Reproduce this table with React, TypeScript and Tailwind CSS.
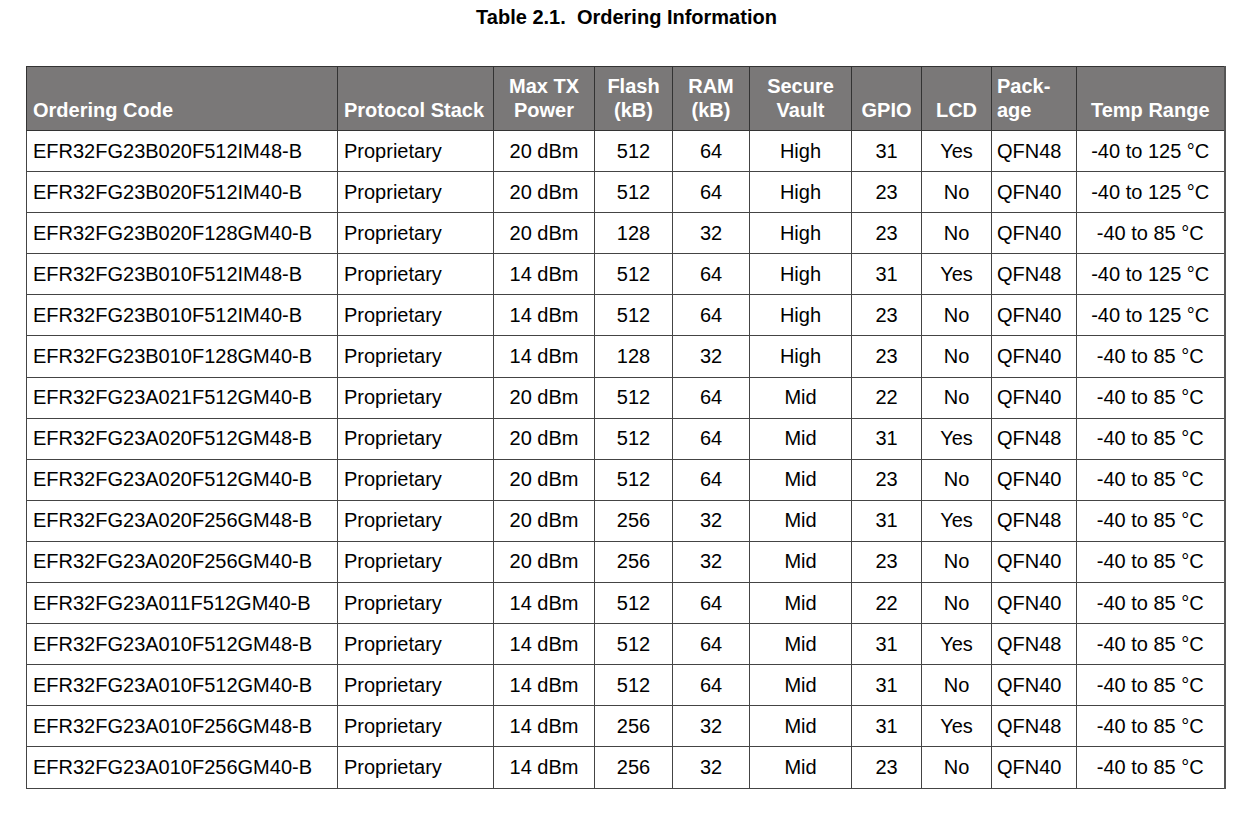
const rows: string[][] = [
  ['EFR32FG23B020F512IM48-B', 'Proprietary', '20 dBm', '512', '64', 'High', '31', 'Yes', 'QFN48', '-40 to 125 °C'],
  ['EFR32FG23B020F512IM40-B', 'Proprietary', '20 dBm', '512', '64', 'High', '23', 'No', 'QFN40', '-40 to 125 °C'],
  ['EFR32FG23B020F128GM40-B', 'Proprietary', '20 dBm', '128', '32', 'High', '23', 'No', 'QFN40', '-40 to 85 °C'],
  ['EFR32FG23B010F512IM48-B', 'Proprietary', '14 dBm', '512', '64', 'High', '31', 'Yes', 'QFN48', '-40 to 125 °C'],
  ['EFR32FG23B010F512IM40-B', 'Proprietary', '14 dBm', '512', '64', 'High', '23', 'No', 'QFN40', '-40 to 125 °C'],
  ['EFR32FG23B010F128GM40-B', 'Proprietary', '14 dBm', '128', '32', 'High', '23', 'No', 'QFN40', '-40 to 85 °C'],
  ['EFR32FG23A021F512GM40-B', 'Proprietary', '20 dBm', '512', '64', 'Mid', '22', 'No', 'QFN40', '-40 to 85 °C'],
  ['EFR32FG23A020F512GM48-B', 'Proprietary', '20 dBm', '512', '64', 'Mid', '31', 'Yes', 'QFN48', '-40 to 85 °C'],
  ['EFR32FG23A020F512GM40-B', 'Proprietary', '20 dBm', '512', '64', 'Mid', '23', 'No', 'QFN40', '-40 to 85 °C'],
  ['EFR32FG23A020F256GM48-B', 'Proprietary', '20 dBm', '256', '32', 'Mid', '31', 'Yes', 'QFN48', '-40 to 85 °C'],
  ['EFR32FG23A020F256GM40-B', 'Proprietary', '20 dBm', '256', '32', 'Mid', '23', 'No', 'QFN40', '-40 to 85 °C'],
  ['EFR32FG23A011F512GM40-B', 'Proprietary', '14 dBm', '512', '64', 'Mid', '22', 'No', 'QFN40', '-40 to 85 °C'],
  ['EFR32FG23A010F512GM48-B', 'Proprietary', '14 dBm', '512', '64', 'Mid', '31', 'Yes', 'QFN48', '-40 to 85 °C'],
  ['EFR32FG23A010F512GM40-B', 'Proprietary', '14 dBm', '512', '64', 'Mid', '31', 'No', 'QFN40', '-40 to 85 °C'],
  ['EFR32FG23A010F256GM48-B', 'Proprietary', '14 dBm', '256', '32', 'Mid', '31', 'Yes', 'QFN48', '-40 to 85 °C'],
  ['EFR32FG23A010F256GM40-B', 'Proprietary', '14 dBm', '256', '32', 'Mid', '23', 'No', 'QFN40', '-40 to 85 °C'],
];

// column widths + alignment, left to right
const cols = [
  { w: 'w-[311px]', align: 'text-left pl-[6px]' },
  { w: 'w-[156px]', align: 'text-left pl-[6px]' },
  { w: 'w-[101px]', align: 'text-center' },
  { w: 'w-[78px]', align: 'text-center' },
  { w: 'w-[77px]', align: 'text-center' },
  { w: 'w-[102px]', align: 'text-center' },
  { w: 'w-[70px]', align: 'text-center' },
  { w: 'w-[70px]', align: 'text-center' },
  { w: 'w-[85px]', align: 'text-left pl-[5px]' },
  { w: 'w-[148px]', align: 'text-center' },
];

const headers: string[][] = [
  ['Ordering Code'],
  ['Protocol Stack'],
  ['Max TX', 'Power'],
  ['Flash', '(kB)'],
  ['RAM', '(kB)'],
  ['Secure', 'Vault'],
  ['GPIO'],
  ['LCD'],
  ['Pack-', 'age'],
  ['Temp Range'],
];

export default function App() {
  return (
    <div className="w-[1253px] h-[818px] bg-white text-black" style={{ fontFamily: '"Liberation Sans", Arial, sans-serif' }}>
      <h1 className="pt-[7px] text-center text-[20px] font-bold leading-[20px] whitespace-pre">
        {'Table 2.1.  Ordering Information'}
      </h1>

      <table className="ml-[26px] mt-[39px] table-fixed border-collapse w-[1199px] border-r-2 border-r-[#555] border-b border-b-[#666]">
        <colgroup>
          {cols.map((c, i) => (
            <col key={i} className={c.w} />
          ))}
        </colgroup>
        <thead>
          <tr className="h-[64px] bg-[#7a7878]">
            {headers.map((h, i) => (
              <th
                key={i}
                className={`border border-[#333] align-bottom pb-[8px] text-[20px] font-bold leading-[23.5px] text-white ${cols[i].align}`}
              >
                {h.map((line, j) => (
                  <div key={j}>{line}</div>
                ))}
              </th>
            ))}
          </tr>
        </thead>
        <tbody>
          {rows.map((r, ri) => (
            <tr key={ri} className="h-[41.1px]">
              {r.map((cell, ci) => (
                <td
                  key={ci}
                  className={`border border-[#444] align-middle text-[20px] leading-[23px] whitespace-nowrap ${cols[ci].align}`}
                >
                  {cell}
                </td>
              ))}
            </tr>
          ))}
        </tbody>
      </table>
    </div>
  );
}
